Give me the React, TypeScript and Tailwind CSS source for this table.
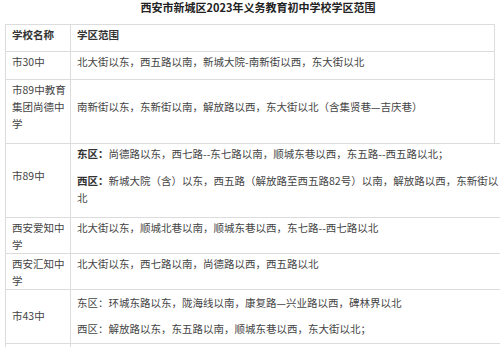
export default function App() {
  const c1 = "w-[65px] shrink-0 border-l border-[#dcdcdc] pl-[6px] pr-[4px] pt-[1px]";
  const c2 = "flex-1 border-l border-[#dcdcdc] pl-[6px] pr-[2px] pt-[1px]";
  return (
    <div className="w-[500px] h-[347px] overflow-hidden bg-white text-[#444] text-[10.5px] leading-[17px] font-['Noto_Sans_CJK_SC','Noto_Sans',sans-serif]">
      <h1 className="h-[24px] pl-[16px] text-center text-[11px] font-bold leading-[15px] text-[#222]">
        西安市新城区2023年义务教育初中学校学区范围
      </h1>
      <div className="pl-[5px]">
        <div className="flex h-[27px] w-[490px] border-t border-r border-[#dcdcdc] font-bold text-[#333]">
          <div className={c1 + " pt-0"}>学校名称</div>
          <div className={c2 + " pt-0"}>学区范围</div>
        </div>
        <div className="flex h-[28px] w-[490px] border-t border-r border-[#dcdcdc]">
          <div className={c1}>市30中</div>
          <div className={c2}>北大街以东，西五路以南，新城大院-南新街以西，东大街以北</div>
        </div>
        <div className="flex h-[64px] w-[490px] border-t border-r border-[#dcdcdc]">
          <div className={c1}>市89中教育集团尚德中学</div>
          <div className={c2 + " pt-[18px]"}>南新街以东，东新街以南，解放路以西，东大街以北（含集贤巷—吉庆巷）</div>
        </div>
        <div className="flex h-[74px] w-[510px] border-t border-[#dcdcdc]">
          <div className={c1 + " flex items-center pt-0 pb-[11px]"}>市89中</div>
          <div className="w-[437px] border-l border-[#dcdcdc] pl-[6px] pr-[8px] pt-[1px]">
            <p className="mb-[10px]">
              <b className="text-[#333]">东区：</b>尚德路以东，西七路--东七路以南，顺城东巷以西，东五路--西五路以北；
            </p>
            <p>
              <b className="text-[#333]">西区：</b>新城大院（含）以东，西五路（解放路至西五路82号）以南，解放路以西，东新街以北
            </p>
          </div>
        </div>
        <div className="flex h-[36px] w-[510px] border-t border-[#dcdcdc]">
          <div className={c1}>西安爱知中学</div>
          <div className={c2}>北大街以东，顺城北巷以南，顺城东巷以西，东七路--西七路以北</div>
        </div>
        <div className="flex h-[36px] w-[510px] border-t border-[#dcdcdc]">
          <div className={c1}>西安汇知中学</div>
          <div className={c2}>北大街以东，西七路以南，尚德路以西，西五路以北</div>
        </div>
        <div className="flex h-[54px] w-[510px] border-t border-[#dcdcdc]">
          <div className={c1 + " flex items-center pt-0 pb-[4px]"}>市43中</div>
          <div className={c2 + " pt-[4px]"}>
            <p className="mb-[9px]">东区：环城东路以东，陇海线以南，康复路—兴业路以西，碑林界以北</p>
            <p>西区：解放路以东，东五路以南，顺城东巷以西，东大街以北；</p>
          </div>
        </div>
        <div className="flex h-[40px] w-[510px] border-t border-[#dcdcdc]">
          <div className={c1}></div>
          <div className={c2}></div>
        </div>
      </div>
    </div>
  );
}
